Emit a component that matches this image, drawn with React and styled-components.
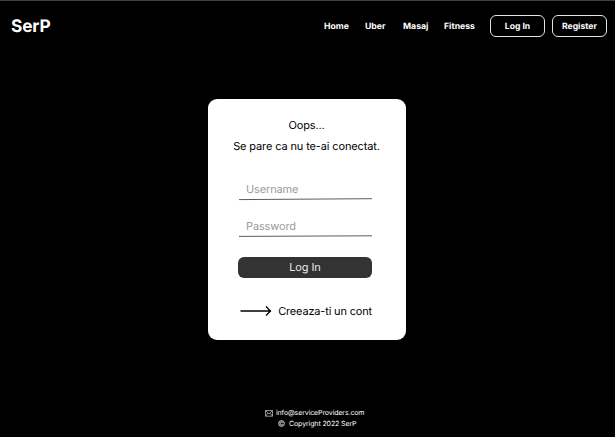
import React from 'react';
import styled, { createGlobalStyle } from 'styled-components';

const GlobalStyle = createGlobalStyle`
  *, *::before, *::after { box-sizing: border-box; }
  body { margin: 0; background: #000; font-family: Inter, sans-serif; }
`;

const Page = styled.div`
  display: flex;
  flex-direction: column;
  align-items: center;
  height: 437px;
  overflow: hidden;
  background: #000;
  border-top: 1px solid #404040;
  color: #fff;
  text-rendering: geometricPrecision;
`;

const Header = styled.header`
  display: flex;
  justify-content: space-between;
  width: 100%;
  height: 52px;
  padding: 0 8px 0 11px;
`;

const Logo = styled.div`
  margin-top: 15px;
  font-size: 17.3px;
  font-weight: 700;
  letter-spacing: -0.15px;
  line-height: 21px;
`;

const Nav = styled.nav`
  display: flex;
  padding-top: 14px;
`;

const NavLink = styled.a`
  width: ${({ $width }) => $width}px;
  font-size: 8.7px;
  font-weight: 700;
  line-height: 24px;
  white-space: nowrap;
`;

const NavButton = styled.button`
  width: 55px;
  height: 22px;
  margin-right: ${({ $gap }) => $gap || 0}px;
  padding: 1px 0 0;
  border: 1px solid #e4e4e4;
  border-radius: 6px;
  background: transparent;
  color: #fff;
  font: 700 8.6px/20px Inter, sans-serif;
  text-rendering: geometricPrecision;
`;

const Card = styled.main`
  display: flex;
  flex-direction: column;
  align-items: center;
  width: 198px;
  height: 241.5px;
  margin: 45.5px 2px 0 0;
  padding-top: 16px;
  border-radius: 9px;
  background: #fff;
  color: #000;
`;

const Message = styled.p`
  margin: 0;
  font-size: 11px;
  letter-spacing: -0.13px;
  line-height: 21px;
  white-space: nowrap;
`;

const Form = styled.form`
  display: flex;
  flex-direction: column;
  width: 134px;
  margin: 25px 0 0 -3px;
`;

const Field = styled.label`
  display: flex;
  flex-direction: column;
  height: 37.5px;
  margin-left: 1px;
`;

const Input = styled.input`
  width: 133px;
  height: 15px;
  padding: 0 7px;
  border: 0;
  outline: 0;
  background: transparent;
  font: 400 11px/15px Inter, sans-serif;
  letter-spacing: -0.13px;
  text-rendering: geometricPrecision;
  &::placeholder { color: #9b9b9b; opacity: 1; }
`;

const Underline = styled.svg`
  width: 133px;
  height: 4px;
`;

const Submit = styled.button`
  height: 21px;
  padding: 0;
  border: 0;
  border-radius: 6px;
  background: #333;
  color: #e8e8e8;
  font: 400 11px/21px Inter, sans-serif;
  letter-spacing: -0.1px;
  text-rendering: geometricPrecision;
`;

const SignUp = styled.a`
  display: flex;
  align-items: center;
  justify-content: space-between;
  height: 16px;
  margin: 25px 0 0 2px;
  font-size: 11px;
  letter-spacing: -0.17px;
  white-space: nowrap;
`;

const ArrowGraphic = styled.svg`
  flex: none;
  width: 32px;
  height: 12px;
`;

const Footer = styled.footer`
  display: flex;
  flex-direction: column;
  width: 100px;
  margin: 67px 0 0 15px;
  font-size: 7px;
  letter-spacing: -0.11px;
  line-height: 11px;
`;

const FooterLine = styled.div`
  display: flex;
  align-items: center;
  gap: ${({ $gap }) => $gap}px;
  padding-left: ${({ $indent }) => $indent || 0}px;
  white-space: nowrap;
`;

function Rule({ y1, y2 }) {
  return (
    <Underline viewBox="0 0 133 4">
      <path d={`M0 ${y1} L133 ${y2}`} stroke="#333" strokeWidth=".8" />
    </Underline>
  );
}

function ArrowIcon() {
  return (
    <ArrowGraphic viewBox="0 0 32 12" fill="none" stroke="#000" strokeWidth="1.3">
      <path d="M.5 6H31M26 1.5L30.5 6L26 10.5" />
    </ArrowGraphic>
  );
}

function MailIcon() {
  return (
    <svg width="8" height="8" viewBox="0 0 8 8" fill="none" stroke="#ccc" strokeWidth=".7">
      <path d="M.5 1.5H7.5V7.2H.5ZM.5 1.5L4 4.8L7.5 1.5M.5 7.2L3 4M7.5 7.2L5 4" />
    </svg>
  );
}

function CopyrightIcon() {
  return (
    <svg width="7" height="7" viewBox="0 0 7 7" fill="none" stroke="#fff" strokeWidth=".9">
      <circle cx="3.5" cy="3.5" r="2.8" />
      <path d="M4.6 2.7A1.3 1.3 0 1 0 4.6 4.3" />
    </svg>
  );
}

export default function App() {
  return (
    <>
      <GlobalStyle />
      <Page>
        <Header>
          <Logo>SerP</Logo>
          <Nav>
            <NavLink $width={41}>Home</NavLink>
            <NavLink $width={38}>Uber</NavLink>
            <NavLink $width={41}>Masaj</NavLink>
            <NavLink $width={46}>Fitness</NavLink>
            <NavButton $gap={7}>Log In</NavButton>
            <NavButton>Register</NavButton>
          </Nav>
        </Header>
        <Card>
          <Message>Oops...</Message>
          <Message>Se pare ca nu te-ai conectat.</Message>
          <Form>
            <Field>
              <Input placeholder="Username" aria-label="Username" />
              <Rule y1={2.6} y2={1.7} />
            </Field>
            <Field>
              <Input type="password" placeholder="Password" aria-label="Password" />
              <Rule y1={2.4} y2={1.8} />
            </Field>
            <Submit type="button">Log In</Submit>
            <SignUp>
              <ArrowIcon />
              Creeaza-ti un cont
            </SignUp>
          </Form>
        </Card>
        <Footer>
          <FooterLine $gap={3}><MailIcon />info@serviceProviders.com</FooterLine>
          <FooterLine $gap={4} $indent={13}><CopyrightIcon />Copyright 2022 SerP</FooterLine>
        </Footer>
      </Page>
    </>
  );
}
